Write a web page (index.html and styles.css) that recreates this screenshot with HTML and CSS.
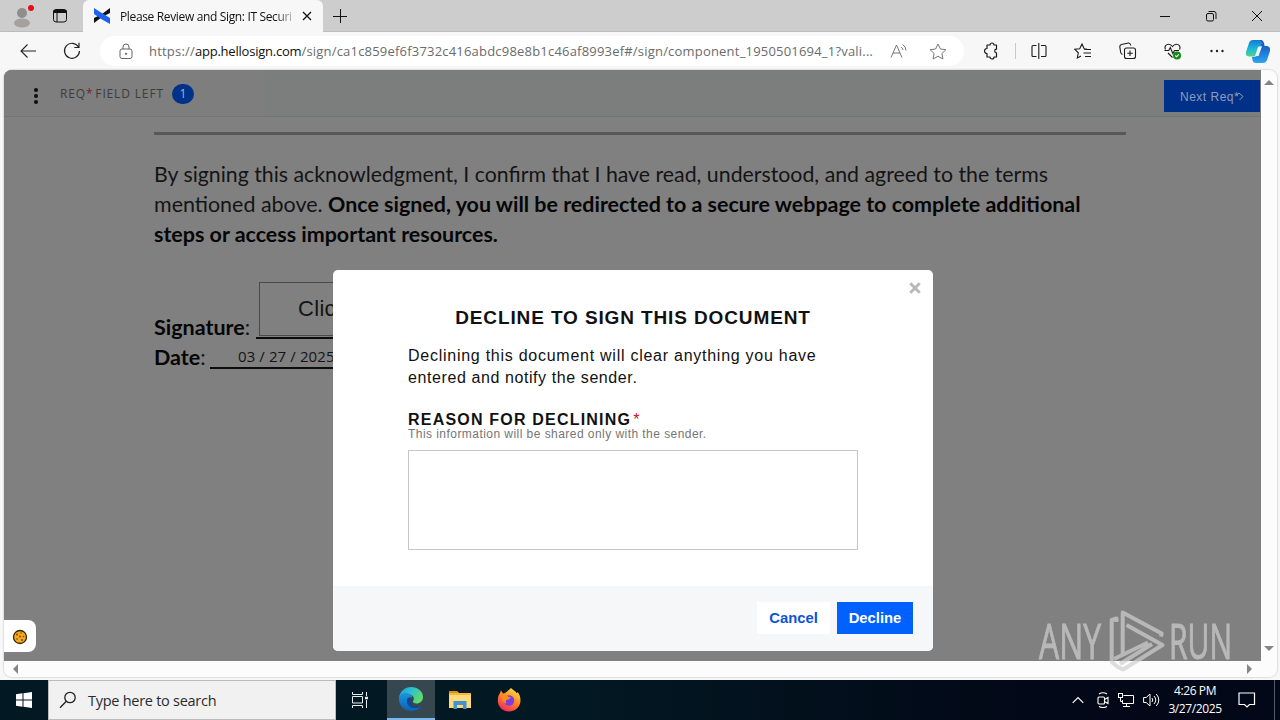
FILE: index.html
```html
<!DOCTYPE html>
<html lang="en">
<head>
    <meta charset="utf-8">
    <title>Please Review and Sign</title>
    <link rel="stylesheet" href="styles.css">
</head>
<body>
    <div class="tabbar">
        <svg class="profile" width="24" height="28" viewBox="0 0 24 28">
            <circle cx="10" cy="11" r="5" fill="#918d8b"/>
            <ellipse cx="10" cy="21" rx="8" ry="4.6" fill="#a5a19f"/>
            <circle cx="19" cy="6" r="3" fill="#e3101c"/>
        </svg>
        <svg class="tab-menu" width="16" height="16" viewBox="0 0 16 16" fill="none" stroke="#111">
            <rect x="1.5" y="1.5" width="13" height="12.5" rx="2.5"/>
            <path d="M1.5 3.5h13" stroke-width="3"/>
            <path d="M5 4v10"/>
        </svg>
        <div class="tab">
            <svg width="18" height="16" viewBox="0 0 18 16">
                <path d="M17 0v5L9 9 1 15v-5l8-4z" fill="#111"/>
                <path d="M1 0l7 4.5L17 10v6l-8-4.500L1 6z" fill="#1f62ef"/>
            </svg>
            <span class="tab-title">Please Review and Sign: IT Securi</span>
            <svg width="10" height="10" viewBox="0 0 10 10" stroke="#111" stroke-width="1.3"><path d="M1 1l8 8M9 1l-8 8"/></svg>
        </div>
        <svg class="new-tab" width="14" height="14" viewBox="0 0 14 14" stroke="#111"><path d="M0 7.500h14M7.500 0v14"/></svg>
        <div class="window-buttons">
            <svg width="12" height="12" viewBox="0 0 12 12" stroke="#111"><path d="M1 6.500h10"/></svg>
            <svg width="12" height="12" viewBox="0 0 12 12" stroke="#111" fill="none"><rect x="1.500" y="3.500" width="7" height="7.500" rx="1.500"/><path d="M3.500 1.500H9q2 0 2 2V9"/></svg>
            <svg width="12" height="12" viewBox="0 0 12 12" stroke="#111"><path d="M1 1l10 10M11 1L1 11"/></svg>
        </div>
    </div>

    <div class="toolbar">
        <svg class="back" width="16" height="14" viewBox="0 0 16 14" fill="none" stroke="#222" stroke-width="1.100"><path d="M16 7H1M7.500 .5L1 7l6.500 6.500"/></svg>
        <svg class="reload" width="18" height="18" viewBox="0 0 18 18" fill="none" stroke="#222" stroke-width="1.200"><path d="M15.500 5A7.500 7.500 0 1 0 16.500 9M16 .8V5.500h-4.700"/></svg>
        <div class="address">
            <svg width="14" height="17" viewBox="0 0 14 17" fill="none" stroke="#666"><rect x="1" y="6" width="12" height="9.500" rx="2"/><path d="M4 6V4a3 3 0 0 1 6 0v2"/><circle cx="7" cy="10.700" r=".7" fill="#666"/></svg>
            <span class="url">https://<b>app.hellosign.com</b>/sign/ca1c859ef6f3732c416abdc98e8b1c46af8993ef#/sign/component_1950501694_1?vali...</span>
            <svg class="read-aloud" width="18" height="16" viewBox="0 0 18 16" fill="none" stroke="#777"><path d="M1 14.500L6.500 2 12 14.500M3 10h7M11 4q2 1.200 2 3M12.500 1.500q3.500 2 3.500 6"/></svg>
            <svg width="18" height="17" viewBox="0 0 18 17" fill="none" stroke="#777"><path d="M9 1l2.400 5 5.500.7-4 3.800 1 5.500L9 13.300 4.100 16l1-5.500-4-3.800 5.500-.7z" stroke-linejoin="round"/></svg>
        </div>
        <div class="tools">
            <svg width="16" height="18" viewBox="0 0 16 18" fill="none" stroke="#1b1b1b" stroke-width="1.200"><path d="M4 3h3a2 2 0 0 1 4 0h2.500v4.200a1.600 1.600 0 0 0 0 3.600V15H11a2 2 0 0 1-4 0H4v-3.500a2.400 2.400 0 1 1 0-5z" stroke-linejoin="round"/></svg>
            <i class="divider"></i>
            <svg width="16" height="16" viewBox="0 0 16 16" fill="none" stroke="#1b1b1b" stroke-width="1.100"><path d="M5.500 2.500H2q-1 0-1 1v9q0 1 1 1h3.500M10 2.500h4q1 0 1 1v9q0 1-1 1h-4M7.800 0v16"/></svg>
            <svg width="18" height="17" viewBox="0 0 18 17" fill="none" stroke="#1b1b1b" stroke-width="1.100"><path d="M13 6l-2.800-.3L8 1 5.700 5.700.8 6.300l3.500 3.500-1 5.200L7 13M10 6.500h7M9.500 10h7.500M11 13.500h6"/></svg>
            <svg width="18" height="18" viewBox="0 0 18 18" fill="none" stroke="#1b1b1b" stroke-width="1.100"><rect x="5.500" y="6" width="11" height="10.500" rx="2"/><path d="M11 8.500v5.500M8.300 11.200h5.500M3.500 12.500Q2 12 1.700 10.500L.8 5q-.2-2 1.700-2.500L9.500 1q1.700-.2 2.300 2.500"/></svg>
            <svg width="18" height="18" viewBox="0 0 18 18" fill="none" stroke="#1b1b1b" stroke-width="1.100"><path d="M1.500 7.500C-.5 3 5 0 8.500 4.500 12 0 17.500 3 15.500 7.500M.5 8.500h4.200l1.600-3 2.500 6 1.700-3H15M4 11l4.500 4.500"/><circle cx="13" cy="13.500" r="4" fill="#118a18" stroke="none"/><path d="M11.300 13.500l1.300 1.300 2.200-2.500" stroke="#fff"/></svg>
            <svg width="16" height="16" viewBox="0 0 16 16" fill="#222"><circle cx="2.500" cy="8" r="1.200"/><circle cx="8" cy="8" r="1.200"/><circle cx="13.500" cy="8" r="1.200"/></svg>
            <svg class="copilot" width="24" height="23" viewBox="0 0 24 23">
                <defs>
                    <linearGradient id="cpA" x1="0" y1="0" x2="0" y2="1"><stop offset="0" stop-color="#1479d1"/><stop offset=".5" stop-color="#19b5dc"/><stop offset="1" stop-color="#55d28b"/></linearGradient>
                    <linearGradient id="cpB" x1="0" y1="0" x2="0" y2="1"><stop offset="0" stop-color="#1745b8"/><stop offset="1" stop-color="#2aa5f2"/></linearGradient>
                </defs>
                <path d="M7 0h8q2 0 1.500 2.500L13 14q-1 2.500-3 2.500H3Q-1 16 0 12L3 3Q4 0 7 0z" fill="url(#cpA)"/>
                <path d="M14 0q3 0 4 3l.6 3H21q4 1 3 5l-3 9q-1 3-4 3h-7q-3 0-3.500-3L6 17h3q2 0 3-3l2.500-8q.7-2 2-3z" fill="url(#cpB)"/>
                <path d="M12 7q1-1 4-.8L12.500 16H9z" fill="#f2f8fd"/>
            </svg>
        </div>
    </div>

    <div class="frame">
        <div class="viewport">
            <div class="sign-header">
                <div class="progress">
                    <svg width="6" height="18" viewBox="0 0 6 18" fill="#0c0c0c"><circle cx="3" cy="3" r="2"/><circle cx="3" cy="9" r="2"/><circle cx="3" cy="15" r="2"/></svg>
                    <span class="req-label">REQ<em>*</em> FIELD LEFT</span>
                    <span class="req-count">1</span>
                </div>
                <div class="next-req">Next Req*<svg width="7" height="9" viewBox="0 0 7 9" fill="none" stroke="#8c9db9"><path d="M0 3l2-2M2 1l4 3.500L2.500 8"/></svg></div>
            </div>
            <div class="document">
                <div class="rule"></div>
                <div class="line line-1">By signing this acknowledgment, I confirm that I have read, understood, and agreed to the terms</div>
                <div class="line line-2"><span>mentioned above. </span><b>Once signed, you will be redirected to a secure webpage to complete additional</b></div>
                <div class="line line-3"><b>steps or access important resources.</b></div>
                <div class="sign-row">
                    <span class="field-label sig-label"><b>Signature</b>:</span>
                    <div class="sig-line"><div class="sig-box">Click to sign</div></div>
                </div>
                <div class="date-row">
                    <span class="field-label date-label"><b>Date</b>:</span>
                    <div class="date-line">03 / 27 / 2025</div>
                </div>
            </div>

            <div class="modal">
                <div class="modal-body">
                    <svg class="modal-close" width="12" height="12" viewBox="0 0 12 12" stroke="#b9b9b9" stroke-width="3"><path d="M1.300 1.300l9.400 9.400M10.700 1.300l-9.400 9.400"/></svg>
                    <h1>DECLINE TO SIGN THIS DOCUMENT</h1>
                    <p><span class="p-1">Declining this document will clear anything you have</span><br><span class="p-2">entered and notify the sender.</span></p>
                    <h2><span>REASON FOR DECLINING</span><em>*</em></h2>
                    <div class="hint">This information will be shared only with the sender.</div>
                    <div class="reason"></div>
                </div>
                <div class="modal-footer">
                    <div class="btn">Cancel</div>
                    <div class="btn btn-primary">Decline</div>
                </div>
            </div>

            <div class="cookie">
                <svg width="16" height="16" viewBox="0 0 16 16"><circle cx="8" cy="8" r="6.500" fill="#f5a91c" stroke="#33240c" stroke-width="1.300"/><g fill="#69420a"><circle cx="5" cy="5.500" r=".9"/><circle cx="9" cy="4" r=".7"/><circle cx="8" cy="7.500" r=".9"/><circle cx="11.500" cy="7.500" r=".8"/><circle cx="5" cy="10" r=".8"/><circle cx="10" cy="11" r=".9"/></g></svg>
            </div>
        </div>
        <div class="vscroll"><i class="arrow up"></i><i class="arrow down"></i></div>
        <div class="hscroll"><i class="arrow left"></i><i class="arrow right"></i></div>
    </div>

    <div class="taskbar">
        <svg class="start" width="16" height="16" viewBox="0 0 16 16" fill="#fff"><path d="M0 2.200L6.500 1.300V7.500H0zM7.500 1.200L16 0v7.500H7.500zM0 8.500h6.500v6.200L0 13.800zM7.500 8.500H16V16l-8.500-1.200z"/></svg>
        <div class="search">
            <svg width="18" height="18" viewBox="0 0 18 18" fill="none" stroke="#222" stroke-width="1.300"><circle cx="11" cy="6.500" r="5.200"/><path d="M7.300 10.300L1 16.800"/></svg>
            <span>Type here to search</span>
        </div>
        <svg class="task-view" width="18" height="16" viewBox="0 0 18 16" fill="none" stroke="#e8edf0"><path d="M1.500 0v2.500h10V0M1.500 16v-2.500h10V16M1.500 4.500h10v6.500h-10zM15.500 0v4M15.500 8v8"/><path d="M14 6h3" stroke-width="2.500"/></svg>
        <div class="task active">
            <svg width="24" height="24" viewBox="0 0 24 24">
                <defs>
                    <linearGradient id="edA" x1="0" y1="0" x2="1" y2=".5"><stop offset="0" stop-color="#1d9de0"/><stop offset=".5" stop-color="#2fbfd0"/><stop offset="1" stop-color="#61db68"/></linearGradient>
                    <linearGradient id="edB" x1="0" y1="0" x2="0" y2="1"><stop offset="0" stop-color="#1c97df"/><stop offset="1" stop-color="#0d60b6"/></linearGradient>
                </defs>
                <path d="M0 11C1 4 6 0 12 0c7 0 12 4.500 12 10 0 4-3 6.500-6.500 6.500-2.500 0-4-1-3.500-2.500 2-2 .5-6-3.500-6.500C6 7 1 8 0 11z" fill="url(#edA)"/>
                <path d="M0 12C0 7 4.500 5 8.500 6c3.500.7 5 3 4.500 4.500-4-1-5.500 1.500-5 4.500.5 4 5 7 10 5.500 2-.5 3.300-1.200 3.800-1-2 3-6 4.500-9.800 4.500C5 24 0 18.500 0 12z" fill="url(#edB)"/>
                <path d="M9 11c-2.500 5 1 11 8.500 10 2-.3 3.700-1.200 4.300-1.700-5 1.500-9-.3-9.500-3.800-.2-1.500 0-2.500.7-3.500z" fill="#12488b"/>
            </svg>
        </div>
        <div class="task">
            <svg width="22" height="20" viewBox="0 0 22 20"><path d="M0 1h8l2 2h12v15H0z" fill="#f3b93b"/><path d="M0 5h22v13H0z" fill="#fcd97a"/><path d="M0 1h8l1 2H0z" fill="#d99013"/><path d="M4.500 19v-8h13v8h-3.500v-4H8v4z" fill="#3f93d0"/></svg>
        </div>
        <div class="task">
            <svg width="24" height="24" viewBox="0 0 24 24">
                <defs><linearGradient id="ffA" x1=".8" y1="0" x2=".25" y2="1"><stop offset="0" stop-color="#ffe644"/><stop offset=".45" stop-color="#ff8d23"/><stop offset="1" stop-color="#f0245e"/></linearGradient></defs>
                <path d="M14 0c1.500 2 4.500 3 6 5.500l.5-1.500C22.500 6 23.500 9 23.500 12.500 23.500 19 18 23.500 12 23.500S.8 19 .8 12.500C.8 8.500 2 6.500 3 5l1-2.500L6 5.500 8 5l2-1.500z" fill="url(#ffA)"/>
                <circle cx="12" cy="12.500" r="5.200" fill="#7b3ddb"/>
                <path d="M4 8c3-2 6-1.500 7.500 1H14l-2.500 2.500c-3 0-3.500 2-2 3.800C7 15.500 4.500 12 4 8z" fill="#ff8a22"/>
            </svg>
        </div>
        <div class="tray">
            <svg width="12" height="8" viewBox="0 0 12 8" fill="none" stroke="#fff" stroke-width="1.200"><path d="M.7 6.800L6 1.500l5.300 5.300"/></svg>
            <svg width="12" height="16" viewBox="0 0 12 16" fill="none" stroke="#fff" stroke-width="1.100"><rect x="1" y="5" width="6.500" height="7" rx="1"/><path d="M7.500 7.500l3.500-2v6l-3.500-2M2 2q4-2.500 8 0M2 14.500q4 2 8 0"/></svg>
            <svg width="16" height="14" viewBox="0 0 16 14" fill="none" stroke="#fff"><path d="M5.500 2.500h10v8H4.500V7M5 13.500h7M8.500 10.500v3"/><rect x=".5" y=".5" width="4" height="4"/><path d="M2.500 4.500v4h2"/></svg>
            <svg width="17" height="14" viewBox="0 0 17 14" fill="none" stroke="#fff"><path d="M.6 4.500h2.600L7 1v12L3.200 9.500H.6zM9 5q1.500 2 0 4M11 3q3.500 4 0 8M13.300 1q5 6 0 12"/></svg>
        </div>
        <div class="clock"><span>4:26 PM</span><span>3/27/2025</span></div>
        <svg class="notify" width="18" height="17" viewBox="0 0 18 17" fill="none" stroke="#fff" stroke-width="1.200"><path d="M1 1h15.500v11.500h-5L9 15l-2.500-2.500H1z"/></svg>
        <i class="show-desktop"></i>
    </div>

    <svg class="watermark" width="210" height="72" viewBox="0 0 210 72">
        <g class="watermark-text">
            <text x="3" y="52" textLength="62" lengthAdjust="spacingAndGlyphs">ANY</text>
            <text x="133" y="52" textLength="63" lengthAdjust="spacingAndGlyphs">RUN</text>
        </g>
        <g class="watermark-logo">
            <path d="M80.500 15v-3.500l-4.800 1.500v42l6 5 5.500 2.500L126.500 38 90.500 18"/>
            <path d="M86.700 48V5.500l39 21-.7 3"/>
            <path d="M78 52l34-16.500M84 57l32-20"/>
        </g>
    </svg>
</body>
</html>
```
FILE: styles.css
```css
* {
    box-sizing: border-box;
}

body {
    margin: 0;
    width: 1280px;
    height: 720px;
    display: flex;
    flex-direction: column;
    overflow: hidden;
    position: relative;
    background: #f7f7f7;
    font-family: "Open Sans", "Noto Sans", sans-serif;
    color: #111;
}

svg {
    display: block;
    flex: none;
}

em {
    font-style: normal;
}

/* tab strip */
.tabbar {
    height: 32px;
    flex: none;
    display: flex;
    align-items: center;
    background: #cdcdcd;
    border-bottom: 1px solid #bdbdbd;
}

.profile {
    margin-left: 12px;
}

.tab-menu {
    margin-left: 16px;
}

.tab {
    width: 240px;
    height: 32px;
    margin-left: 15px;
    padding-left: 10px;
    display: flex;
    align-items: center;
    align-self: flex-start;
    background: #f7f7f7;
    border-radius: 6px 6px 0 0;
}

.tab-title {
    width: 175px;
    margin: 0 7px 0 9px;
    white-space: nowrap;
    font-size: 12px;
    letter-spacing: -0.35px;
    -webkit-mask-image: linear-gradient(90deg, #000 155px, transparent 178px);
}

.new-tab {
    margin-left: 10px;
}

.window-buttons {
    margin-left: auto;
    margin-right: 17px;
    display: flex;
    gap: 34px;
}

/* toolbar */
.toolbar {
    height: 38px;
    flex: none;
    display: flex;
    align-items: center;
}

.back {
    margin-left: 20px;
}

.reload {
    margin-left: 27px;
}

.address {
    width: 864px;
    height: 30px;
    margin-left: 19px;
    padding: 0 17px 0 19px;
    display: flex;
    align-items: center;
    background: #fff;
    border-radius: 15px;
}

.url {
    width: 727px;
    margin-left: 16px;
    white-space: nowrap;
    font-size: 13px;
    letter-spacing: 0.2px;
    color: #6b6b6b;
}

.url b {
    font-weight: 400;
    letter-spacing: -0.22px;
    color: #111;
}

.read-aloud {
    margin-left: 14px;
    margin-right: auto;
}

.tools {
    margin-left: 19px;
    flex: 1;
    display: flex;
    align-items: center;
    gap: 27px;
}

.divider {
    width: 1px;
    height: 16px;
    margin: 0 -12px 0 -11px;
    background: #c9c9c9;
}

.copilot {
    margin-left: -6px;
}

/* page frame with scrollbars */
.frame {
    width: 1273px;
    height: 607px;
    flex: none;
    margin-left: 4px;
    display: grid;
    grid-template-columns: 1257px 16px;
    grid-template-rows: 591px 16px;
    overflow: hidden;
    background: #fcfcfc;
    border-radius: 8px;
    box-shadow: 0 0 1px 1px #dedede;
}

.viewport {
    position: relative;
    background: #808080;
    overflow: hidden;
}

.vscroll {
    padding: 10px 0 10px 3px;
    display: flex;
    flex-direction: column;
    justify-content: space-between;
}

.hscroll {
    padding: 3px 9px 0;
    display: flex;
    justify-content: space-between;
}

.arrow {
    border: 0 solid transparent;
}

.up, .down {
    width: 10px;
    border-width: 0 5px 5px;
    border-bottom-color: #858585;
}

.down {
    border-width: 5px 5px 0;
    border-top-color: #858585;
}

.left, .right {
    height: 10px;
    border-width: 5px 5px 5px 0;
    border-right-color: #858585;
}

.right {
    border-width: 5px 0 5px 5px;
    border-left-color: #858585;
}

/* signer header */
.sign-header {
    height: 47px;
    display: flex;
    justify-content: space-between;
    background: #7b7e7d;
    border-bottom: 1px solid #747474;
}

.progress {
    width: 260px;
    padding: 5px 0 0 29px;
    display: flex;
    align-items: center;
    background: #7e7e7e;
}

.req-label {
    width: 112px;
    margin: -5px 0 0 21px;
    font-size: 12px;
    letter-spacing: 0.85px;
    white-space: nowrap;
    color: #3d3d3d;
}

.req-label em {
    letter-spacing: -1.2px;
    color: #7a1f25;
}

.req-count {
    width: 22px;
    height: 20px;
    margin-top: -3px;
    border-radius: 10px;
    background: #00328a;
    color: #a6b4cc;
    font-size: 12px;
    line-height: 20px;
    text-align: center;
}

.next-req {
    width: 96px;
    height: 32px;
    margin: 10px 1px 0 0;
    padding: 1px 0 0 16px;
    display: flex;
    align-items: center;
    white-space: nowrap;
    background: #003088;
    color: #8c9db9;
    font-family: "Liberation Sans", sans-serif;
    font-size: 12px;
    letter-spacing: 0.5px;
}

.next-req svg {
    margin-left: -2px;
}

/* document */
.document {
    padding: 15px 0 0 150px;
    font-family: Lato, sans-serif;
    font-size: 21.5px;
    color: #141414;
}

.document b {
    color: #060606;
}

.rule {
    width: 972px;
    height: 3px;
    margin-bottom: 24px;
    background: #585858;
}

.line {
    height: 30px;
    line-height: 30px;
    white-space: nowrap;
}

.line-1 {
    font-size: 21.3px;
}

.line-2, .line-3 {
    font-size: 21.45px;
}

.sign-row {
    height: 57px;
    margin-top: 33px;
    display: flex;
    align-items: flex-end;
}

.date-row {
    height: 30px;
    display: flex;
    align-items: flex-end;
}

.field-label {
    line-height: 24px;
}

.sig-label {
    width: 102px;
}

.date-label {
    width: 56px;
}

.sig-line {
    width: 300px;
    height: 57px;
    padding-left: 3px;
    border-bottom: 2px solid #0c0c0c;
}

.sig-box {
    width: 220px;
    height: 54px;
    padding-left: 38px;
    border: 1px solid #4a4a4a;
    font-family: "Liberation Sans", sans-serif;
    font-size: 22px;
    line-height: 52px;
    letter-spacing: 0.3px;
}

.date-line {
    width: 180px;
    height: 24px;
    padding-left: 28px;
    border-bottom: 2px solid #0c0c0c;
    font-family: "Open Sans", sans-serif;
    font-size: 15px;
    line-height: 23px;
    white-space: nowrap;
    letter-spacing: 0.1px;
}

/* decline dialog */
.modal {
    position: absolute;
    left: 329px;
    top: 200px;
    width: 600px;
    height: 381px;
    display: flex;
    flex-direction: column;
    overflow: hidden;
    border-radius: 5px;
    background: #fff;
    font-family: "Liberation Sans", sans-serif;
    white-space: nowrap;
}

.modal-body {
    flex: 1;
    position: relative;
    padding: 36px 75px 0;
}

.modal-close {
    position: absolute;
    right: 12px;
    top: 12px;
}

.modal h1 {
    margin: 0 0 15px;
    font-size: 19px;
    line-height: 24px;
    font-weight: 700;
    letter-spacing: 0.88px;
    text-align: center;
}

.modal p {
    margin: 0 0 21px;
    font-size: 16px;
    line-height: 22px;
}

.p-1 {
    letter-spacing: 0.74px;
}

.p-2 {
    letter-spacing: 0.59px;
}

.modal h2 {
    margin: 0;
    height: 20px;
    font-size: 16px;
    line-height: 20px;
    letter-spacing: 1.2px;
}

.modal h2 em {
    margin-left: 2px;
    color: #d1101c;
    font-weight: 400;
}

.hint {
    height: 20px;
    margin-top: -4px;
    font-size: 12px;
    line-height: 16px;
    letter-spacing: 0.45px;
    color: #757575;
}

.reason {
    height: 100px;
    margin-top: 4px;
    border: 1px solid #c5c5c5;
}

.modal-footer {
    height: 65px;
    padding: 16px 20px 0;
    display: flex;
    justify-content: flex-end;
    gap: 7px;
    background: #f6f7f9;
}

.btn {
    width: 73px;
    height: 32px;
    line-height: 33px;
    text-align: center;
    background: #fff;
    color: #0c54d4;
    font-size: 14.8px;
    font-weight: 700;
}

.btn-primary {
    width: 76px;
    background: #0061fe;
    color: #fff;
}

.cookie {
    position: absolute;
    left: 0;
    bottom: 9px;
    width: 32px;
    height: 32px;
    padding: 9px 8px 7px;
    border-radius: 0 8px 8px 0;
    background: #fff;
}

/* taskbar */
.taskbar {
    height: 40px;
    margin-top: 3px;
    display: flex;
    align-items: center;
    background: linear-gradient(90deg, #021822 0, #021822 45%, #020817 80%, #020817 100%);
}

.start {
    margin: 0 16px;
}

.search {
    width: 288px;
    height: 40px;
    padding-left: 10px;
    display: flex;
    align-items: center;
    gap: 11px;
    border: 1px solid #bcbcbc;
    background: #f1f1f1;
    font-size: 14.5px;
    letter-spacing: -0.27px;
    color: #2b2b2b;
}

.task-view {
    margin: 0 18px 0 15px;
}

.task {
    width: 48px;
    height: 40px;
    margin-right: 1px;
    display: flex;
    align-items: center;
    justify-content: center;
}

.active {
    background: #36474f;
    border-bottom: 2px solid #76b9ed;
}

.tray {
    margin-left: auto;
    display: flex;
    align-items: center;
    gap: 9px;
}

.tray svg:first-child {
    margin-right: 4px;
}

.clock {
    width: 70px;
    display: flex;
    flex-direction: column;
    align-items: center;
    color: #fff;
    font-size: 12px;
    line-height: 18px;
    letter-spacing: -0.4px;
}

.notify {
    margin-left: 8px;
}

.show-desktop {
    width: 1px;
    height: 40px;
    margin: 0 5px 0 18px;
    background: #545c68;
}

.watermark {
    position: absolute;
    left: 1036px;
    top: 607px;
}

.watermark-text {
    font-family: "Open Sans", sans-serif;
    font-size: 50px;
    fill: #d0d0d0;
    stroke: #d0d0d0;
    stroke-width: 1px;
    opacity: 0.7;
}

.watermark-logo {
    fill: none;
    stroke: #d0d0d0;
    stroke-width: 4px;
    stroke-linejoin: round;
    opacity: 0.7;
}
```
